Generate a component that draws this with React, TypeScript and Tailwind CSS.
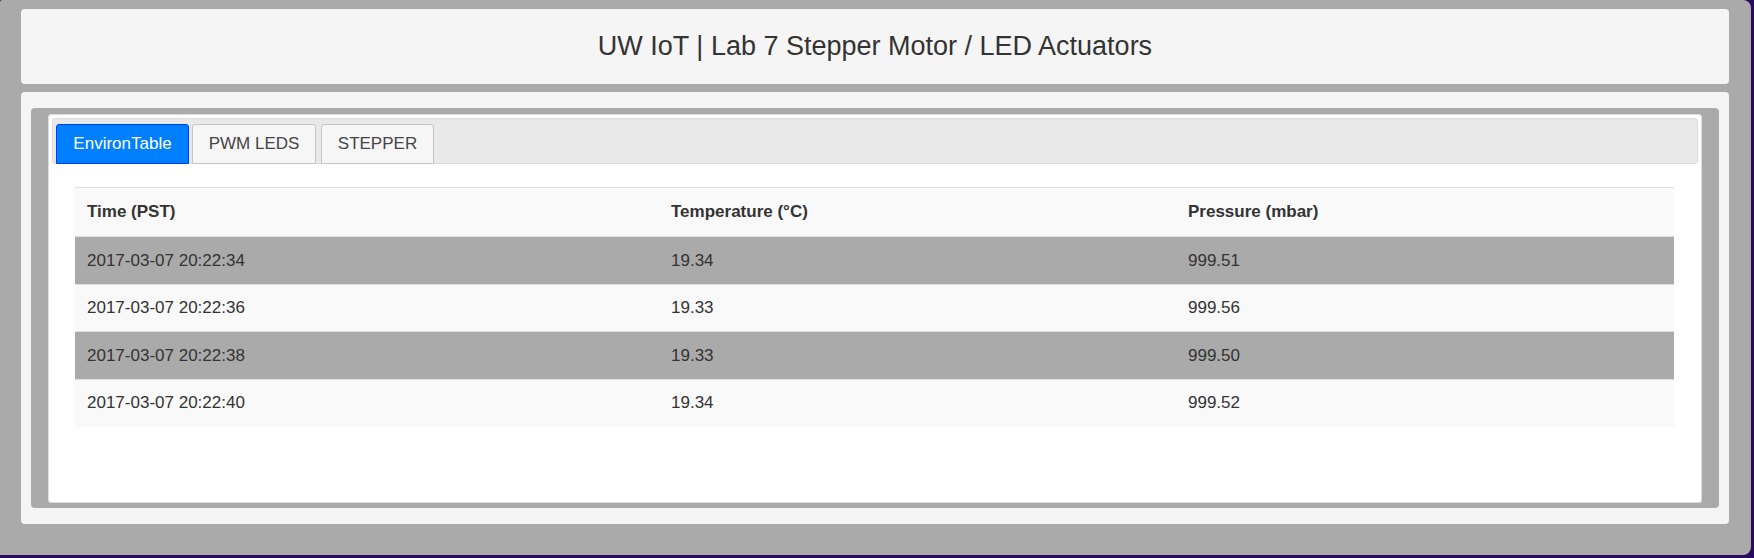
const rows = [
  { time: '2017-03-07 20:22:34', temp: '19.34', pressure: '999.51' },
  { time: '2017-03-07 20:22:36', temp: '19.33', pressure: '999.56' },
  { time: '2017-03-07 20:22:38', temp: '19.33', pressure: '999.50' },
  { time: '2017-03-07 20:22:40', temp: '19.34', pressure: '999.52' },
];

function Tab({ label, active, className }: { label: string; active?: boolean; className: string }) {
  return (
    <div
      className={
        'flex h-[40px] -mb-px items-center justify-center rounded-t-[3px] border text-[17px] ' +
        (active
          ? 'border-[#003eff] bg-[#007fff] text-white '
          : 'border-[#c5c5c5] bg-[#f6f6f6] text-[#454545] ') +
        className
      }
    >
      {label}
    </div>
  );
}

export default function App() {
  return (
    <div
      className="h-[558px] w-[1754px] bg-[#2a0a5c] pb-[3px] pr-[3px] text-[#333]"
      style={{ fontFamily: '"Liberation Sans", Arial, sans-serif' }}
    >
      <div className="h-full rounded-tl-[2px] rounded-tr-[8px] rounded-br-[8px] bg-[#aaaaaa] pl-[21px] pr-[22px] pt-[9px]">
        <header className="flex h-[75px] items-center justify-center rounded-[4px] bg-[#f5f5f5] text-[27px]">
          UW IoT | Lab 7 Stepper Motor / LED Actuators
        </header>

        <main className="mt-[8px] h-[432px] rounded-[4px] bg-[#f5f5f5] px-[10px] py-[16px]">
          <div className="h-full rounded-[4px] bg-[#aaaaaa] px-[17px] pb-[5px] pt-[6px]">
            <div className="h-full rounded-[3px] border border-[#dddddd] bg-white p-[3px]">
              <nav className="flex h-[46px] items-end rounded-[3px] border border-[#dddddd] bg-[#e9e9e9] px-[3px]">
                <Tab label="EnvironTable" active className="w-[133px]" />
                <Tab label="PWM LEDS" className="ml-[3px] w-[124px]" />
                <Tab label="STEPPER" className="ml-[5px] w-[113px]" />
              </nav>

              <div className="pl-[23px] pr-[24px] pt-[23px]">
                <table className="w-full border-collapse text-left text-[17px] text-[#333]">
                  <thead>
                    <tr className="h-[49px] border-t border-[#dddddd] bg-[#f9f9f9]">
                      <th className="w-[584px] px-[12px] font-bold">Time (PST)</th>
                      <th className="w-[517px] px-[12px] font-bold">Temperature (°C)</th>
                      <th className="px-[12px] font-bold">Pressure (mbar)</th>
                    </tr>
                  </thead>
                  <tbody>
                    {rows.map((r, i) => (
                      <tr
                        key={r.time}
                        className={
                          'h-[47.5px] border-t border-[#dddddd] ' +
                          (i % 2 === 0 ? 'bg-[#aaaaaa]' : 'bg-[#f9f9f9]')
                        }
                      >
                        <td className="px-[12px]">{r.time}</td>
                        <td className="px-[12px]">{r.temp}</td>
                        <td className="px-[12px]">{r.pressure}</td>
                      </tr>
                    ))}
                  </tbody>
                </table>
              </div>
            </div>
          </div>
        </main>
      </div>
    </div>
  );
}
